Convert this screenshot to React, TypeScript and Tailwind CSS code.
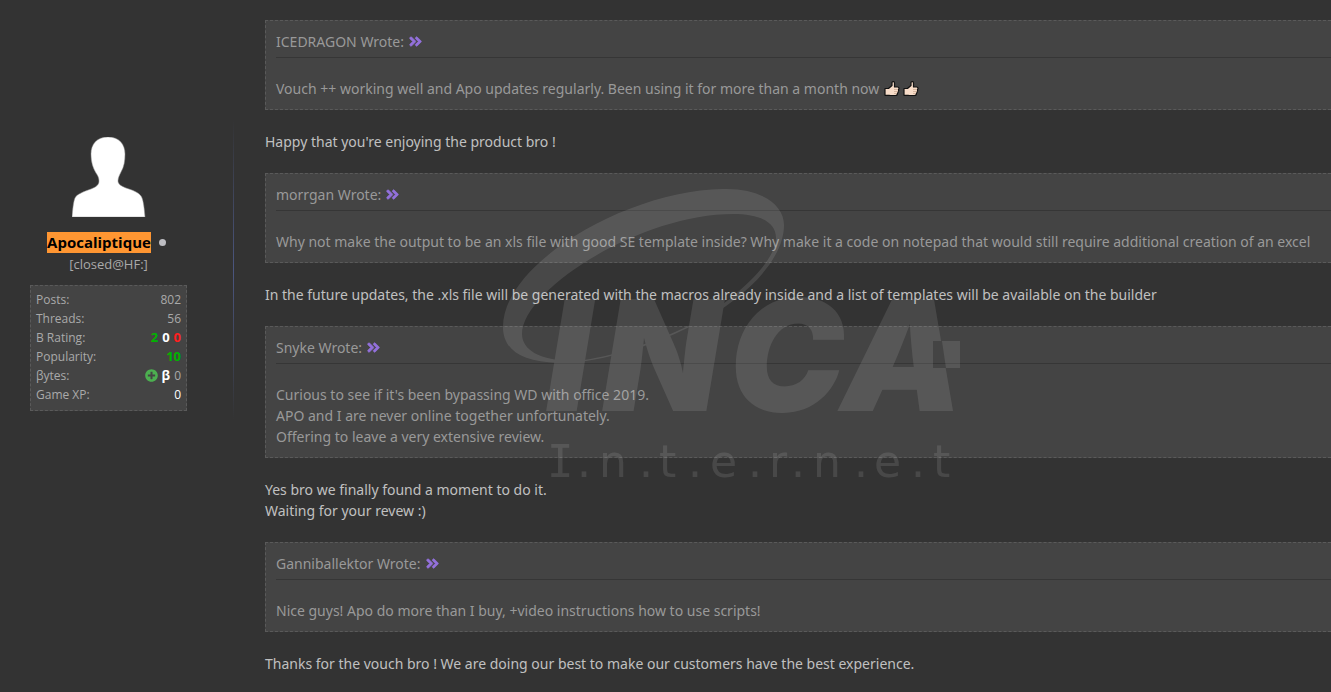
import React from 'react';
import { FaAngleDoubleRight, FaPlusCircle } from 'react-icons/fa';

interface Quote {
  author: string;
  lines: string[];
  thumbs?: number;
  reply: string[];
}

const quotes: Quote[] = [
  {
    author: 'ICEDRAGON',
    lines: ['Vouch ++ working well and Apo updates regularly. Been using it for more than a month now'],
    thumbs: 2,
    reply: ["Happy that you're enjoying the product bro !"],
  },
  {
    author: 'morrgan',
    lines: [
      'Why not make the output to be an xls file with good SE template inside? Why make it a code on notepad that would still require additional creation of an excel',
    ],
    reply: [
      'In the future updates, the .xls file will be generated with the macros already inside and a list of templates will be available on the builder',
    ],
  },
  {
    author: 'Snyke',
    lines: [
      "Curious to see if it's been bypassing WD with office 2019.",
      'APO and I are never online together unfortunately.',
      'Offering to leave a very extensive review.',
    ],
    reply: ['Yes bro we finally found a moment to do it.', 'Waiting for your revew :)'],
  },
  {
    author: 'Ganniballektor',
    lines: ['Nice guys! Apo do more than I buy, +video instructions how to use scripts!'],
    reply: ['Thanks for the vouch bro ! We are doing our best to make our customers have the best experience.'],
  },
];

const ThumbsUp = () => (
  <svg viewBox="0 0 16 16" className="w-4 h-4" role="img" aria-label="thumbs up">
    <path
      d="M1 7.5h3.5L8 4.5V1.5q0-.8 1-.8h.5q1 0 1 1.3v4h3q1.5 0 1.5 1.2 0 .8-.5 1.2.5 1.2-.3 2 .2 1.2-.7 1.800 0 2.3-2 2.3H6.500L5 14.3H1z"
      fill="#f7dcc8"
      stroke="#111"
      strokeWidth="1.2"
      strokeLinejoin="round"
    />
    <path d="M10 8.5h4M10 10.5h4M10 12.5h3" stroke="#c9a68f" strokeWidth="0.7" />
  </svg>
);

const Avatar = () => (
  <svg viewBox="0 0 74 80" className="w-[74px] h-20" role="img" aria-label="Avatar">
    <path
      d="M36 0C25 0 19 7 19 17c0 8 2 14 5 19 2 3 3 5 3 8 0 4-3 6-8 8-8 3-14 5-16 9-1 2-2 7-3 19h73c-1-12-2-18-4-21-3-4-9-6-15-8-5-2-8-4-8-7 0-3 1-5 3-9 3-5 4-11 4-18C53 7 47 0 36 0z"
      fill="#fff"
      stroke="#999"
      strokeWidth="0.5"
    />
  </svg>
);

const Watermark = () => (
  <svg
    viewBox="490 185 484 310"
    className="absolute left-[490px] top-[185px] w-[484px] h-[310px] pointer-events-none opacity-10"
    fill="#fff"
    aria-hidden="true"
  >
    <mask id="letters" maskUnits="userSpaceOnUse" x="490" y="185" width="484" height="310">
      <rect x="490" y="185" width="484" height="310" fill="#fff" />
      <path d="M933 341H960V368H933z" fill="#000" />
    </mask>
    <path
      fillRule="evenodd"
      d="M723 189C760 188 784 204 784 225C784 262 740 302 697 323C660 343 600 364 558 363C522 362 503 350 503 327C503 262 630 190 723 189ZM733 214C640 214 522 290 522 334C522 350 540 360 570 361C600 361 655 343 696 322C735 299 776 262 776 238C776 222 760 214 733 214Z"
    />
    <g mask="url(#letters)">
      <text x="546 602 729 841" y="411" className="font-['Inter'] font-black italic text-[154px]">
        INCA
      </text>
    </g>
    <path d="M942 341H960V368H946z" />
    <text
      x="547 577 599 639 659 688 710 748 769 791 813 854 874 911 933"
      y="477"
      className="font-['DejaVu_Sans'] text-[44px]"
    >
      <tspan className="font-['DejaVu_Sans_Mono']">I</tspan>.n.t.e.r.n.e.t
    </text>
  </svg>
);

const StatRow = ({ label, children }: { label: string; children: React.ReactNode }) => (
  <div className="flex items-center justify-between">
    <dt>{label}</dt>
    <dd className="flex items-center gap-1">{children}</dd>
  </div>
);

const AuthorPanel = () => (
  <aside className="w-[234px] shrink-0 flex pt-[120px]">
    <div className="grow pt-[17px] pl-[30px] pr-[46px] flex flex-col items-center">
      <Avatar />
      <div className="mt-[15px] flex items-center gap-2 pr-1">
        <a href="#profile" className="bg-[#ff9632] text-black text-[15px] leading-[21px] font-bold">
          Apocaliptique
        </a>
        <span className="w-[7px] h-[7px] rounded-full bg-[#bdbdc2]" title="Offline" />
      </div>
      <div className="text-[13px] leading-[23px]">[closed@HF:]</div>
      <dl className="mt-[9px] w-full border border-dashed border-[#5a5a5a] bg-[#444] px-[5px] pt-1 pb-1.5 text-xs leading-[19px]">
        <StatRow label="Posts:">802</StatRow>
        <StatRow label="Threads:">56</StatRow>
        <StatRow label="B Rating:">
          <b className="text-[13px] text-[#00b400]">2</b>
          <b className="text-[13px] text-white">0</b>
          <b className="text-[13px] text-[#ff2020]">0</b>
        </StatRow>
        <StatRow label="Popularity:">
          <b className="text-[13px] text-[#00b400]">10</b>
        </StatRow>
        <StatRow label="βytes:">
          <FaPlusCircle className="w-[13px] h-[13px] text-[#4caf50]" />
          <b className="text-[13px] text-white">β</b>
          <span>0</span>
        </StatRow>
        <StatRow label="Game XP:">
          <span className="text-white">0</span>
        </StatRow>
      </dl>
    </div>
    <div className="w-px h-[300px] bg-linear-to-b from-transparent via-[#4b5680] to-transparent" />
  </aside>
);

const QuoteBox = ({ quote }: { quote: Quote }) => (
  <blockquote className="border border-r-0 border-dashed border-[#5a5a5a] bg-[#444] text-[#999] pl-2.5 py-2.5">
    <cite className="flex items-center gap-1 not-italic pb-[5px] border-b border-[#363636]">
      {quote.author} Wrote:
      <a href="#post" aria-label="Go to quoted post" className="text-[#9370db]">
        <FaAngleDoubleRight className="w-[15px] h-[15px]" stroke="currentColor" strokeWidth="24" />
      </a>
    </cite>
    <div className="pt-5">
      {quote.lines.map((line, i) => (
        <p key={i} className="flex items-center">
          {line}
          {quote.thumbs && (
            <span className="flex gap-[3px] pl-[5px]">
              {Array.from({ length: quote.thumbs }, (_, n) => (
                <ThumbsUp key={n} />
              ))}
            </span>
          )}
        </p>
      ))}
    </div>
  </blockquote>
);

export default function App() {
  return (
    <div className="relative min-h-screen overflow-hidden bg-[#333] text-[#aaa] font-['Open_Sans',sans-serif] flex">
      <AuthorPanel />
      <main className="grow min-w-0 pl-[31px] pt-5 pb-[18px] flex flex-col gap-[21px] font-['Noto_Sans',sans-serif] text-sm leading-[21px] whitespace-nowrap text-[#c0c0c0]">
        {quotes.map((quote) => (
          <React.Fragment key={quote.author}>
            <QuoteBox quote={quote} />
            <div>
              {quote.reply.map((line) => (
                <p key={line}>{line}</p>
              ))}
            </div>
          </React.Fragment>
        ))}
      </main>
      <Watermark />
    </div>
  );
}
